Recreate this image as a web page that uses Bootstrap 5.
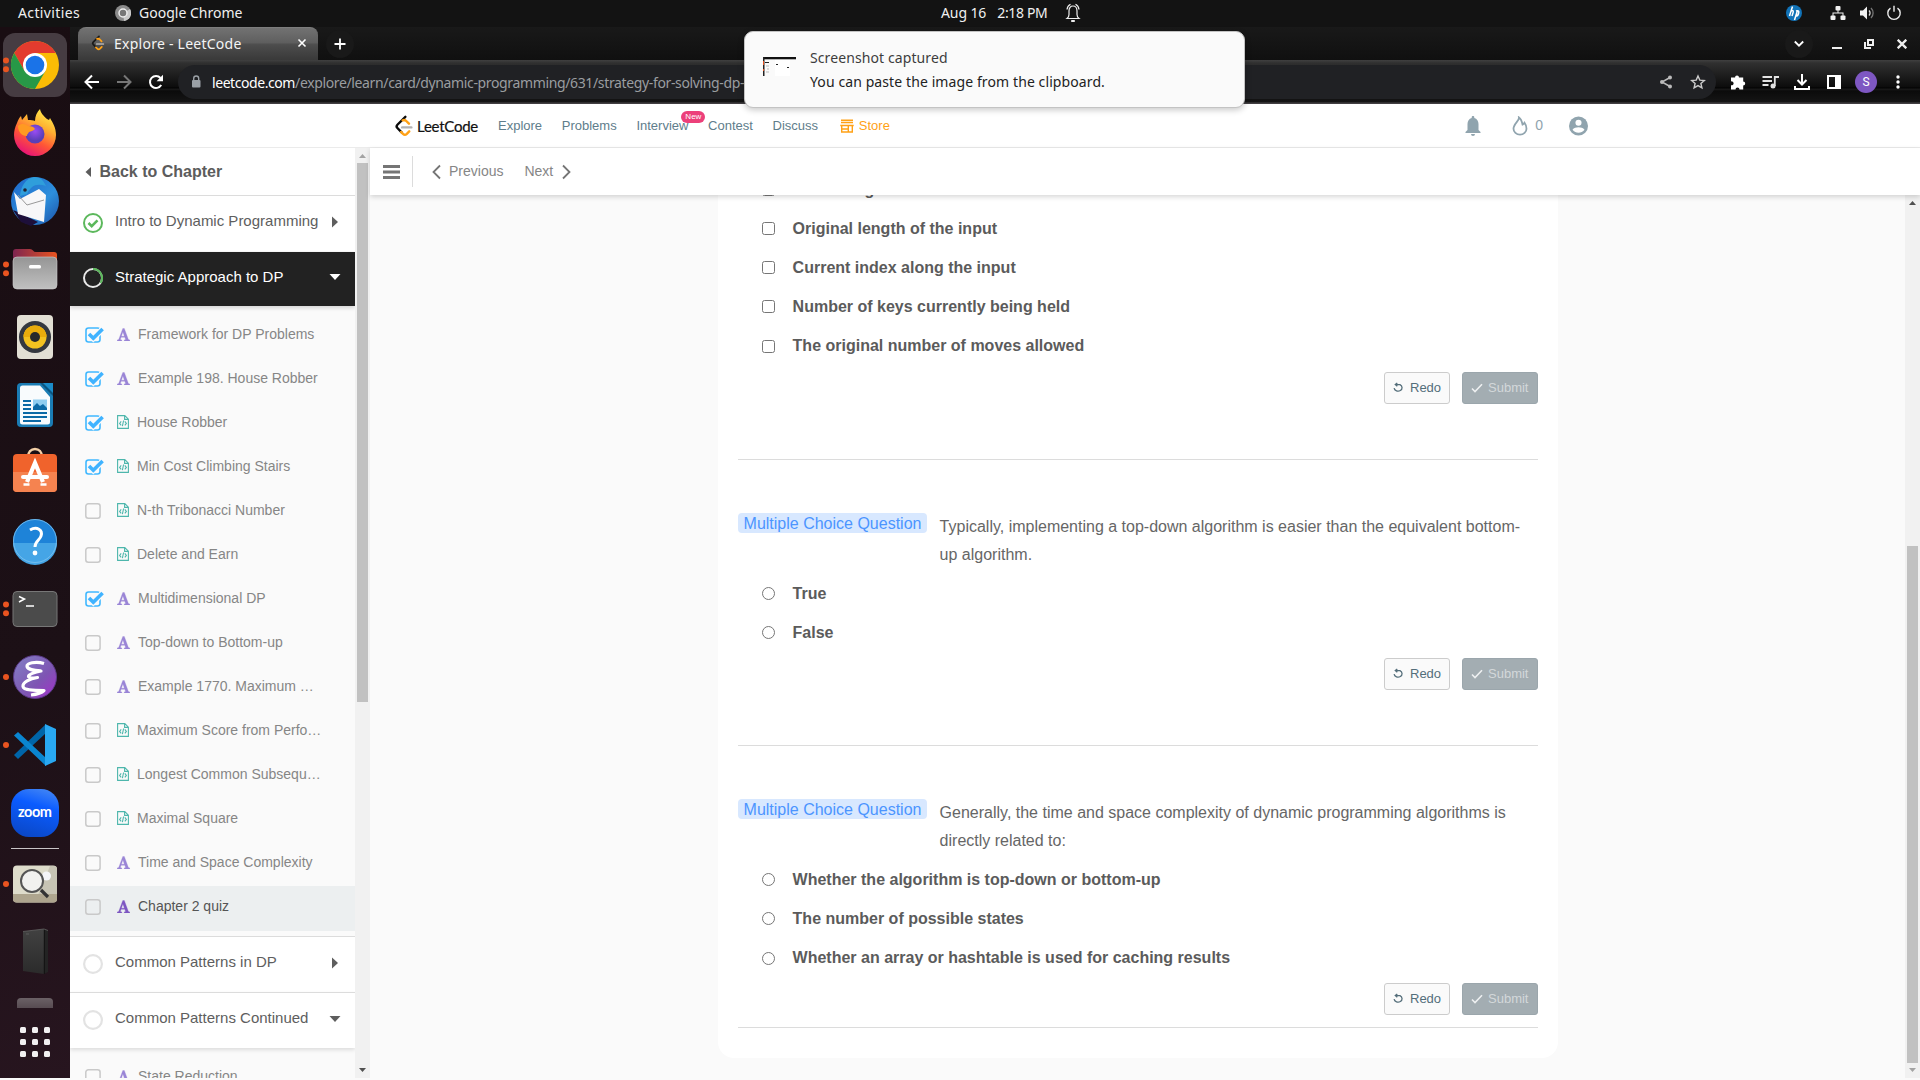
<!DOCTYPE html>
<html lang="en">
<head>
<meta charset="utf-8">
<title>Explore - LeetCode</title>
<meta name="viewport" content="width=device-width, initial-scale=1">
<link href="https://cdn.jsdelivr.net/npm/bootstrap@5.3.0/dist/css/bootstrap.min.css" rel="stylesheet">
<style>
  html, body { height: 100%; overflow: hidden; }
  body { font-family: "Liberation Sans", Arial, sans-serif; color: #5a5a5a; background: #fafafa; font-size: 14px; line-height: 1.5; }
  svg { display: block; flex: none; }
  .desk { width: 1920px; height: 1080px; }
  .sysfont { font-family: "Noto Sans", "Open Sans", sans-serif; white-space: pre; }

  /* GNOME top bar */
  .topbar { height: 27px; background: #131313; color: #f0f0f0; font-size: 14px; line-height: 22px; padding-bottom: 1px; }
  .tb-side { width: 941px; }
  .tb-act { margin-left: 18px; letter-spacing: .37px; }
  .tb-app { margin-left: 35px; }
  .tb-date { letter-spacing: -.1px; }
  .tb-time { margin-left: 11px; letter-spacing: -.35px; }
  .tb-bell { margin-left: 18px; }

  /* dock */
  .dock { width: 70px; background: linear-gradient(160deg, #190d12 0%, #1c1016 60%, #27151f 100%); padding-top: 4px; }
  .dock-rule { width: 48px; height: 1px; margin: 1px 0; background: #c9c5c7; }
  .dock-part { height: 22px; overflow: hidden; }

  /* browser chrome */
  .browser { width: 1850px; }
  .tabstrip { height: 33px; background: linear-gradient(#191919, #101010); }
  .tab { width: 240px; height: 33px; margin-left: 8px; border-radius: 8px 8px 0 0; background: linear-gradient(#727272 0, #5f5f5f 45%, #4d4d4d 52%, #393939 100%); border-top: 1px solid #7d7d7d; color: #f4f4f4; font-size: 14px; padding: 0 8px 2px 12px; }
  .tab-title { margin-left: 8px; letter-spacing: .25px; }
  .round-btn { width: 28px; height: 28px; border-radius: 50%; background: #191919; }
  .w32 { width: 32px; }
  .toolbar-row { height: 44px; background: linear-gradient(#404040 0, #303030 3px, #0c0c0c 27px, #000 28px, #1b1b1b 29px, #0b0b0b 31px, #151515 42px, #4a474a 43px, #3a373a 44px); padding-left: 6px; }
  .urlbox { width: 1538px; height: 34px; border-radius: 17px; background: #202124; color: #9a9da0; font-size: 14px; padding: 0 2px 0 8px; margin-left: 6px; letter-spacing: -.36px; }
  .urlbox b { font-weight: 400; color: #fff; letter-spacing: -.43px; }
  .avatar { width: 22px; height: 22px; border-radius: 50%; background: #7e57c2; color: #fff; font-size: 12px; font-family: Roboto, sans-serif; }

  /* site header */
  .site-head { height: 44px; background: #fff; border-bottom: 1px solid #ebebeb; font-size: 13px; color: #607d8b; padding-left: 323px; }
  .site-head .nl { line-height: 18px; }
  .site-nav { gap: 19.700px; }
  .brandname { width: 61px; margin-left: 2px; font-family: Lato, sans-serif; font-size: 15px; color: #111; -webkit-text-stroke: .2px #111; letter-spacing: -.25px; line-height: 20px; white-space: nowrap; }
  .new-tag { position: absolute; left: 45px; top: -6px; width: 24px; height: 12px; border-radius: 7px; background: #ec407a; color: #fff; font-size: 8px; line-height: 12px; text-align: center; }

  /* chapter sidebar */
  .side { width: 285px; height: 930px; overflow: hidden; background: #fafafa; }
  .back-row { height: 48px; background: #fff; border-bottom: 1px solid #dcdcdc; font-size: 16px; font-weight: 700; padding-left: 15px; padding-top: 1px; color: #5c5c5c; gap: 8.500px; }
  .chap { height: 55px; background: #fff; font-size: 15px; color: #5e5e5e; padding-left: 13px; padding-right: 12px; }
  .chap > svg { margin-bottom: 2px; }
  .chap .cname { margin-left: 12px; padding-bottom: 4px; }
  .chap .caret { padding-bottom: 4px; width: 16px; }
  .chap.active-chap { height: 54px; background: #222; color: #fff; box-shadow: 0 2px 4px rgba(0,0,0,.15); position: relative; margin-top: 1px; }
  .chap.open-chap { box-shadow: 0 2px 4px rgba(0,0,0,.12); position: relative; }
  .chap.ruled { border-top: 1px solid #dcdcdc; height: 56px; }
  .lessons { padding: 8px 0 6px; }
  .lesson { height: 44px; padding-left: 15px; padding-bottom: 4px; color: #868686; font-size: 14px; }
  .lesson.current { background: #eceff0; color: #555; height: 45px; padding-bottom: 5px; margin-bottom: -1px; }
  .lesson .lname { line-height: 20px; }
  .tick { margin-top: 1px; width: 20px; }
  .kind { width: 13px; margin: 0 8px 0 12px; }
  .kind.code { width: 12px; }

  /* scrollbars drawn as part of the page */
  .sbar { width: 15px; background: #f1f1f1; }
  .sbar .thumb { width: 11px; background: #c1c1c1; }

  /* lesson area */
  .mainbar { height: 47px; background: #fff; color: #868686; font-size: 14px; box-shadow: 0 2px 5px rgba(0,0,0,.16); position: relative; padding-left: 13px; }
  .vrule { width: 1px; height: 31px; background: #dcdcdc; }
  .main { width: 1550px; height: 930px; background: #fafafa; }
  .scroller { height: 883px; overflow: hidden; }
  .quiz { width: 840px; flex: none; background: #fff; border-radius: 0 0 16px 16px; padding: 0 20px 30px; margin: 0 auto 20px 348px; font-size: 16px; }
  .opt { height: 39.2px; padding-left: 24px; font-weight: 700; color: #5b5b5b; line-height: 20px; }
  .opt .form-check-input { width: 13px; height: 13px; margin: 0 17.600px .6px 0; border: 1px solid #767676; flex: none; }
  .opt .form-check-input[type=checkbox] { border-radius: 2.5px; }
  .acts { margin-top: 6px; gap: 12px; }
  .acts-last { margin-top: 5px; }
  .acts .btn { height: 32px; font-size: 13px; padding: 0 8px; border-radius: 3px; line-height: 30px; gap: 5px; }
  .btn-redo { width: 66px; background: #fafafa; border: 1px solid #ccc; color: #546e7a; }
  .btn-send { width: 76px; background: #a3adb2; border: 1px solid #9ba6ac; color: #d3d8da; }
  .qline { height: 1px; background: #dcdcdc; }
  .qline-mid { margin: 55px 0 53px; }
  .qtag { height: 20px; width: 189px; border-radius: 4px; background: #d8e8ff; color: #4c95ff; line-height: 21px; text-align: center; flex: none; }
  .qtext { margin-left: 12.600px; padding-right: 6px; line-height: 27.5px; color: #666; }
  .qhead { height: 55px; margin-bottom: 6px; }

  /* desktop notification */
  .note { position: absolute; left: 744px; top: 31px; width: 501px; height: 77px; border-radius: 9px; background: #fafafa; border: 1px solid #c3c3c3; box-shadow: 0 2px 6px rgba(0,0,0,.22); z-index: 20; padding-left: 18px; font-size: 14px; color: #3d3d3d; letter-spacing: .1px; }
  .note .shot { margin-bottom: 6px; }
  .note .lines { line-height: 24px; margin-left: 14px; }
  .note .second { color: #222; }
</style>
<script src="https://cdn.jsdelivr.net/npm/bootstrap@5.3.0/dist/js/bootstrap.bundle.min.js"></script>
</head>
<body>
<svg width="0" height="0" class="position-absolute">
  <defs>
    <symbol id="i-checked" viewBox="0 0 20 17"><rect x="1" y="2" width="14" height="14" rx="2.500" fill="none" stroke="#40b8ff" stroke-width="1.600"/><path d="M4.300 8.300l4 4 9.500-9.500" fill="none" stroke="#fafafa" stroke-width="6"/><path d="M4 8l4.300 4.300L17.600 3" fill="none" stroke="#40b3ff" stroke-width="3.600"/></symbol>
    <symbol id="i-box" viewBox="0 0 20 17"><rect x=".8" y="1.800" width="14.300" height="14.400" rx="2.500" fill="none" stroke="#c9c9c9" stroke-width="1.500"/></symbol>
    <symbol id="i-art" viewBox="0 0 13 13"><path fill-rule="evenodd" d="M5.800.400h1.500l4.100 11.200 1.400.4v.9H7.200V12l1.400-.4-.8-2.300H4.100l-.8 2.300 1.500.4v.9H.2V12l1.500-.4zM5.900 3.900L4.400 8.200h3z" fill="currentColor" stroke="currentColor" stroke-width=".3"/></symbol>
    <symbol id="i-code" viewBox="0 0 12 14"><path d="M.6.600h7.200l3.600 3.600v9.200H.600zM7.600.600v3.800h3.800M4.200 6.300L2.600 8.400l1.600 2M7.800 6.300l1.600 2.100-1.600 2M6.600 5.500L5.400 11.200" fill="none" stroke="#4db6ac" stroke-width="1.100"/></symbol>
    <symbol id="i-ring" viewBox="0 0 20 20"><circle cx="10" cy="10" r="8.900" fill="none" stroke="#e3e3e3" stroke-width="2.200"/></symbol>
    <symbol id="i-right" viewBox="0 0 16 16"><path d="M5 2.500l6 5.500-6 5.500z" fill="currentColor"/></symbol>
    <symbol id="i-down" viewBox="0 0 16 16"><path d="M2.500 5h11L8 11z" fill="currentColor"/></symbol>
    <symbol id="i-redo" viewBox="0 0 12 12"><path d="M2.300 2.600H7a4 3.500 0 1 1-5.900 3.600M4.300.900L2.300 2.600l2 1.600" fill="none" stroke="#546e7a" stroke-width="1.300"/></symbol>
    <symbol id="i-ok" viewBox="0 0 12 12"><path d="M1 6.500l3 3L11 2.300" fill="none" stroke="#eef0f1" stroke-width="1.600"/></symbol>
    <symbol id="i-leet" viewBox="0 0 24 24"><path d="M13.500 2L4.800 10.600a2.600 2.600 0 0 0 0 3.600l4.600 4.700" fill="none" stroke="var(--lc, #0a0a0a)" stroke-width="2.600" stroke-linecap="round"/><path d="M10.500 5.800l1.500-.3a3 3 0 0 1 2.200.8l3.200 3.200M8.900 18.500l2 2a3 3 0 0 0 4.200 0l2.600-2.700" fill="none" stroke="#ffa116" stroke-width="2.600" stroke-linecap="round"/><path d="M10 13.500h10" stroke="#b3b3b3" stroke-width="2.600" stroke-linecap="round"/></symbol>
    <linearGradient id="g-folder" x1="0" y1="0" x2="0" y2="1"><stop offset="0" stop-color="#959595"/><stop offset="1" stop-color="#c0c0c0"/></linearGradient>
    <linearGradient id="g-folderback"><stop offset="0" stop-color="#7d2550"/><stop offset="1" stop-color="#e95420"/></linearGradient>
    <linearGradient id="g-fox" x1=".8" y1="0" x2=".3" y2="1"><stop offset="0" stop-color="#fff44f"/><stop offset=".35" stop-color="#ffb031"/><stop offset=".65" stop-color="#ff5636"/><stop offset="1" stop-color="#e6107a"/></linearGradient>
    <radialGradient id="g-globe" cx=".5" cy=".35"><stop offset="0" stop-color="#9a4cf4"/><stop offset="1" stop-color="#5a3fb8"/></radialGradient>
    <linearGradient id="g-emacs" x1="0" y1="0" x2="1" y2="1"><stop offset="0" stop-color="#8381c5"/><stop offset=".6" stop-color="#7e55b3"/><stop offset="1" stop-color="#a52ecb"/></linearGradient>
    <linearGradient id="g-zoom" x1=".7" y1="0" x2=".4" y2="1"><stop offset="0" stop-color="#3f83f5"/><stop offset=".35" stop-color="#0b5cff"/><stop offset="1" stop-color="#0a48c8"/></linearGradient>
    <linearGradient id="g-bird" x1="0" y1="0" x2="1" y2="1"><stop offset="0" stop-color="#1d66c8"/><stop offset=".6" stop-color="#2d8fdc"/><stop offset="1" stop-color="#1b4fa6"/></linearGradient>
    <linearGradient id="g-drive" x1="0" y1="0" x2="0" y2="1"><stop offset="0" stop-color="#414141"/><stop offset="1" stop-color="#2b2b2b"/></linearGradient>
    <linearGradient id="g-part" x1="0" y1="0" x2="0" y2="1"><stop offset="0" stop-color="#6b6166"/><stop offset=".5" stop-color="#43363d"/></linearGradient>
  </defs>
</svg>

<div class="desk d-flex flex-column position-relative">
  <header class="topbar sysfont d-flex align-items-center">
    <div class="tb-side d-flex align-items-center">
      <span class="tb-act">Activities</span>
      <svg class="tb-app" width="16" height="20" viewBox="0 0 16 20"><circle cx="8" cy="10" r="8" fill="#8b8b8b"/><path d="M8 10l7-4a8 8 0 0 1-6 12z" fill="#c9c9c9"/><circle cx="8" cy="10" r="4" fill="#777" stroke="#eee" stroke-width="1.500"/></svg>
      <span class="ms-2">Google Chrome</span>
    </div>
    <span class="tb-date">Aug 16</span><span class="tb-time">2:18 PM</span>
    <svg class="tb-bell" width="16" height="20" viewBox="0 0 16 20" fill="none" stroke="#eee" stroke-width="1.200"><path d="M2 15.500h12c-1.500-1.200-2-2.300-2-4V8c0-3-1.500-5-4-5S4 5 4 8v3.500c0 1.700-.5 2.800-2 4z"/><path d="M2 6.500C2.200 4 3.500 2.200 5.500 1.200M14 6.500c-.2-2.500-1.500-4.300-3.500-5.300"/><path d="M6.200 18h3.600" stroke-width="2"/></svg>
    <div class="d-flex align-items-center ms-auto" style="padding-right:18px">
      <svg width="16" height="16" viewBox="0 0 16 16"><circle cx="8" cy="8" r="8" fill="#1173b8"/><path d="M6.500 1.500L3.500 11M4.600 6.500c2-1.500 3-.9 2.600.6L6 11M11.500 5.500L8.500 15M10 6c2.500-1 3.300.2 2.600 2.400-.6 2-1.600 3-3.400 2.600" fill="none" stroke="#fff" stroke-width="1.500"/></svg>
      <svg width="16" height="16" viewBox="0 0 16 16" style="margin-left:28px" fill="#f2f2f2"><rect x="5.500" y="1" width="5" height="4.500" rx="1"/><rect x=".5" y="10.500" width="5" height="4.500" rx="1"/><rect x="10.500" y="10.500" width="5" height="4.500" rx="1"/><path d="M7.500 5h1v2.500H13.500V11h-1V8.500h-9V11h-1V7.500h5z"/></svg>
      <svg width="16" height="16" viewBox="0 0 16 16" style="margin-left:13px"><path d="M1 5.500h3L8 1.500v13L4 10.500H1z" fill="#f2f2f2"/><path d="M10 5.500a3.500 3.500 0 0 1 0 5" fill="none" stroke="#ddd" stroke-width="1.300"/><path d="M12 3a7 7 0 0 1 0 10" fill="none" stroke="#777" stroke-width="1.300"/></svg>
      <svg width="16" height="16" viewBox="0 0 16 16" style="margin-left:11px" fill="none" stroke="#eee" stroke-width="1.400"><path d="M4.500 3.100a6.200 6.200 0 1 0 7 0M8 .8v6"/></svg>
    </div>
  </header>

  <div class="d-flex">
    <nav class="dock d-flex flex-column align-items-center">
      <svg width="70" height="68" viewBox="0 0 70 68"><rect x="3" y="2" width="64" height="64" rx="12" fill="#463c42"/><circle cx="6" cy="29.500" r="3" fill="#e95420"/><circle cx="6" cy="38.300" r="3" fill="#e95420"/><g transform="translate(35 34)"><circle r="24" fill="#fbbc05"/><path d="M0-12H20.800A24 24 0 0 0-20.800-12L-10.400 6z" fill="#e33b2e"/><path d="M-20.800-12A24 24 0 0 0 0 24L10.400 6-10.400 6z" fill="#279847"/><circle r="12" fill="#fff"/><circle r="9.300" fill="#1a73e8"/></g></svg>
      <svg width="70" height="68" viewBox="0 0 70 68"><path d="M17 24c1-3 2-5 4-7l1 4 5-6 1 6c3 0 5 0 7 1 0-5 2-9 5-12 1 5 4 7 7 10l2 1 1-2c3 5 6 10 6 17a21 21 0 0 1-42 0c0-4 1-8 3-12z" fill="url(#g-fox)"/><circle cx="35" cy="35" r="9.500" fill="url(#g-globe)"/><path d="M18 27c4-4 9-1 10 0 4 0 6 1 7 3-2 2-4 2-6 3-1 2-2 2-2 4-6 0-9-5-9-10z" fill="#ff9a22"/></svg>
      <svg width="70" height="68" viewBox="0 0 70 68"><circle cx="35" cy="34" r="24" fill="url(#g-bird)"/><path d="M13 43l8 12 10 4 7-4-20-10z" fill="#1d0f3a"/><path d="M14 25l6 7 19-10 7 6-2 27-26-8z" fill="#f7f7f8"/><path d="M18 28l9 10 17-5" fill="none" stroke="#999" stroke-width="1"/><path d="M20 29c1-10 6-18 14-19 8 0 10 5 12 9-10-3-15 0-19 8z" fill="#2f9edb"/><circle cx="25" cy="23" r="1.800" fill="#223"/></svg>
      <svg width="70" height="68" viewBox="0 0 70 68"><circle cx="6" cy="29.500" r="3" fill="#e95420"/><circle cx="6" cy="38.300" r="3" fill="#e95420"/><path d="M13 30V17q0-3 3-3h14q2 0 3 1.500T36 17h18q3 0 3 3v15z" fill="url(#g-folderback)"/><rect x="13" y="22" width="44" height="32" rx="4" fill="url(#g-folder)" stroke="#ccc" stroke-width=".6"/><rect x="29" y="30" width="12" height="3.400" rx="1.500" fill="#fff"/></svg>
      <svg width="70" height="68" viewBox="0 0 70 68"><rect x="17" y="12" width="36" height="44" rx="4" fill="#e2dfd4"/><circle cx="35" cy="34" r="16" fill="#34383f"/><circle cx="35" cy="34" r="11.500" fill="#f3c220"/><path d="M23.500 34a11.500 11.500 0 0 1 23 0z" fill="#e9ac0c"/><circle cx="35" cy="34" r="5" fill="#26282b"/></svg>
      <svg width="70" height="68" viewBox="0 0 70 68"><path d="M17 16q0-4 4-4h21l11 12v28q0 4-4 4H21q-4 0-4-4z" fill="#1a7cb4"/><path d="M20 17q0-2.500 2.500-2.500H40L50 26v25q0 2.500-2.500 2.500h-25Q20 53.500 20 51z" fill="#f8fbfd"/><path d="M40 12h13v13z" fill="#0b5580"/><path d="M43 12h10v10z" fill="#1b8cc9"/><path d="M23 30h8M23 34h8M23 38h8M23 42h24M23 46h24M23 50h18" stroke="#0c6aa6" stroke-width="2"/><rect x="33" y="28.500" width="14" height="10.500" fill="#8fcdf0"/><path d="M33 39v-3l4-4 3 3 3-2 4 4v2z" fill="#0c6aa6"/></svg>
      <svg width="70" height="68" viewBox="0 0 70 68"><path d="M28 18c0-5 3-8 7-8s7 3 7 8" fill="none" stroke="#f3cfa6" stroke-width="2.400"/><rect x="13" y="15" width="44" height="38" rx="4" fill="#f0632c"/><path d="M13 33h44v16q0 4-4 4H17q-4 0-4-4z" fill="#f58350"/><path d="M27 43l8-19 8 19" fill="none" stroke="#fff" stroke-width="4.200"/><path d="M23.500 45.500h6M40.500 45.500h6" stroke="#fff" stroke-width="2.400"/><path d="M23 38h24" stroke="#fff" stroke-width="4" stroke-linecap="round"/></svg>
      <svg width="70" height="68" viewBox="0 0 70 68"><circle cx="35" cy="34" r="22" fill="#1e83d8"/><path d="M13 36a22 22 0 0 0 44 0z" fill="#45a5e6"/><circle cx="35" cy="34" r="21.500" fill="none" stroke="#7fc3ef" stroke-width=".8"/><path d="M30 23c7-4 13 0 11 6-1 4-6 5-6 11" fill="none" stroke="#fff" stroke-width="3"/><circle cx="35" cy="46" r="2.400" fill="#fff"/></svg>
      <svg width="70" height="68" viewBox="0 0 70 68"><circle cx="6" cy="29.500" r="3" fill="#e95420"/><circle cx="6" cy="38.300" r="3" fill="#e95420"/><rect x="13" y="16.500" width="44" height="35" rx="4" fill="#4b4b4b" stroke="#777" stroke-width="1"/><path d="M19 21.500l5.500 2.500-5.500 3M26 31h8" fill="none" stroke="#fff" stroke-width="1.500"/></svg>
      <svg width="70" height="68" viewBox="0 0 70 68"><circle cx="6" cy="34" r="3" fill="#e95420"/><circle cx="35" cy="34" r="21.500" fill="url(#g-emacs)" stroke="#5a3a86" stroke-width="1"/><path d="M44 20.500c-8-2.500-18-.5-17 3s8 4 14 4.500c-6 1-13 3.500-12.500 5.500s5 1.500 9 1c-8 1-15 5-14.500 9s13 4 21 4c-3 3-9 4-13 4.500" fill="none" stroke="#fff" stroke-width="3.200" stroke-linejoin="round"/></svg>
      <svg width="70" height="68" viewBox="0 0 70 68"><circle cx="6" cy="34" r="3" fill="#e95420"/><path d="M14 44l4 4 28-26v-9z" fill="#0065a9"/><path d="M14 24.500l4-3.500 28 26v8z" fill="#0a86d1"/><path d="M45 13l11 5v32l-11 5z" fill="#29a8f2"/></svg>
      <svg width="70" height="68" viewBox="0 0 70 68"><rect x="11" y="10" width="48" height="48" rx="18" fill="url(#g-zoom)"/><text x="35" y="38" text-anchor="middle" font-family="Lato, sans-serif" font-weight="700" font-size="14.500" fill="#fff" textLength="34">zoom</text></svg>
      <div class="dock-rule"></div>
      <svg width="70" height="68" viewBox="0 0 70 68"><circle cx="6" cy="34" r="3" fill="#e95420"/><rect x="13" y="15.500" width="44" height="37" rx="4" fill="#dedccb"/><path d="M38 45l12-29h4q3 0 3 3v26z" fill="#c7c4b4"/><path d="M13 44h44v5q0 3.500-3.500 3.500h-37Q13 52.500 13 49z" fill="#aea58e"/><circle cx="46.500" cy="26" r="4.500" fill="#f4f5f8"/><circle cx="32" cy="31" r="11" fill="#f1f1ef" stroke="#555" stroke-width="2"/><path d="M41 40l7 7" stroke="#333" stroke-width="3.200"/></svg>
      <svg width="70" height="68" viewBox="0 0 70 68"><path d="M23 13.500l21-2.500V56L23 53z" fill="url(#g-drive)"/><path d="M44 11l4 1.500V54l-4 2z" fill="#232323"/><path d="M44.300 11v45" stroke="#111" stroke-width="1"/><path d="M23 13.500l21-2.500 4 1.500M26 16h3" fill="none" stroke="#626262" stroke-width=".8"/></svg>
      <div class="dock-part"><svg width="70" height="68" viewBox="0 0 70 68"><rect x="17" y="12" width="36" height="40" rx="4" fill="url(#g-part)"/></svg></div>
      <svg width="70" height="68" viewBox="0 0 70 68" fill="#f2f0f1"><g id="d3"><rect x="20" y="19" width="6" height="6" rx="1.500"/><rect x="32" y="19" width="6" height="6" rx="1.500"/><rect x="44" y="19" width="6" height="6" rx="1.500"/></g><use href="#d3" y="12"/><use href="#d3" y="24"/></svg>
    </nav>

    <div class="browser">
      <div class="tabstrip d-flex align-items-center">
        <div class="tab sysfont d-flex align-items-center">
          <svg width="16" height="16" style="--lc:#1a1a1a"><use href="#i-leet"/></svg>
          <span class="tab-title">Explore - LeetCode</span>
          <svg class="ms-auto" width="16" height="16" viewBox="0 0 16 16"><path d="M4.500 4.500l7 7M11.500 4.500l-7 7" stroke="#fff" stroke-width="1.600"/></svg>
        </div>
        <div class="round-btn d-flex align-items-center justify-content-center ms-2"><svg width="12" height="12" viewBox="0 0 12 12"><path d="M6 .5v11M.5 6h11" stroke="#fff" stroke-width="1.800"/></svg></div>
        <div class="round-btn d-flex align-items-center justify-content-center ms-auto"><svg width="10" height="10" viewBox="0 0 10 10"><path d="M.8 2.500L5 6.700l4.200-4.200" fill="none" stroke="#fff" stroke-width="1.800"/></svg></div>
        <svg width="10" height="14" viewBox="0 0 10 14" style="margin-left:19px"><rect y="10" width="10" height="2" fill="#eee"/></svg>
        <svg width="10" height="10" viewBox="0 0 10 10" style="margin-left:22px" fill="none" stroke="#eee" stroke-width="2"><rect x="4" y="1" width="5" height="5"/><path d="M1 3v6h6"/></svg>
        <svg width="10" height="10" viewBox="0 0 10 10" style="margin:0 13px 0 23px"><path d="M.7.700l8.600 8.600M9.300.700L.7 9.300" stroke="#eee" stroke-width="2.300"/></svg>
      </div>
      <div class="toolbar-row d-flex align-items-center">
        <div class="w32 d-flex justify-content-center"><svg width="16" height="16" viewBox="0 0 16 16"><path d="M15 8H2M8 1.500L1.500 8 8 14.500" fill="none" stroke="#fff" stroke-width="2"/></svg></div>
        <div class="w32 d-flex justify-content-center"><svg width="16" height="16" viewBox="0 0 16 16"><path d="M1 8h13M8 1.500L14.500 8 8 14.500" fill="none" stroke="#777" stroke-width="2"/></svg></div>
        <div class="w32 d-flex justify-content-center"><svg width="16" height="16" viewBox="0 0 16 16"><path d="M13.200 11A6 6 0 1 1 12.500 4" fill="none" stroke="#fff" stroke-width="2"/><path d="M15 .8v6.400H8.600z" fill="#fff"/></svg></div>
        <div class="urlbox sysfont d-flex align-items-center">
          <svg width="20" height="16" viewBox="0 0 20 16"><rect x="6" y="6" width="8.500" height="7.500" rx="1" fill="#9aa0a6"/><path d="M7.700 6V4.500a2.500 2.500 0 0 1 5 0V6" fill="none" stroke="#9aa0a6" stroke-width="1.400"/></svg>
          <span style="margin-left:6px"><b>leetcode.com</b><span>/explore/learn/card/dynamic-programming/631/strategy-for-solving-dp-</span></span>
          <div class="w32 d-flex justify-content-center ms-auto"><svg width="14" height="14" viewBox="0 0 14 14"><path d="M11 2.500L3 7l8 4.500" fill="none" stroke="#bbb" stroke-width="1.500"/><g fill="#bbb"><circle cx="11" cy="2.500" r="2"/><circle cx="3" cy="7" r="2"/><circle cx="11" cy="11.500" r="2"/></g></svg></div>
          <div class="w32 d-flex justify-content-center"><svg width="16" height="16" viewBox="0 0 16 16"><path d="M8 2l1.800 4.100 4.500.4-3.400 3 1 4.400L8 11.600l-3.900 2.300 1-4.400-3.400-3 4.500-.4z" fill="none" stroke="#ccc" stroke-width="1.400"/></svg></div>
        </div>
        <div class="d-flex align-items-center" style="margin-left:6px">
          <div class="w32 d-flex justify-content-center"><svg width="16" height="16" viewBox="0 0 16 16"><path d="M1 3.500h4a2 2 0 1 1 4 0h4.200v4a2 2 0 1 1 0 4v4H9.500a2 2 0 1 0-4 0H1v-4.300a2 2 0 1 0 0-3.800z" fill="#fff"/></svg></div>
          <div class="w32 d-flex justify-content-center"><svg width="17" height="16" viewBox="0 0 17 16"><path d="M.5 3h9.500M.5 7h9.500M.5 11h6" stroke="#e3e3e3" stroke-width="1.800"/><circle cx="11" cy="12" r="2.500" fill="#e3e3e3"/><path d="M12.800 12V3H17" fill="none" stroke="#e3e3e3" stroke-width="1.800"/></svg></div>
          <div class="w32 d-flex justify-content-center"><svg width="16" height="16" viewBox="0 0 16 16"><path d="M8 0v10M3.500 6L8 10.500 12.500 6M1 12v3h14v-3" fill="none" stroke="#fff" stroke-width="2"/></svg></div>
          <div class="w32 d-flex justify-content-center"><svg width="14" height="14" viewBox="0 0 14 14"><rect x="1" y="1" width="12" height="12" fill="none" stroke="#fff" stroke-width="2"/><rect x="8" y="1" width="5" height="12" fill="#fff"/></svg></div>
          <div class="w32 d-flex justify-content-center"><span class="avatar d-flex align-items-center justify-content-center">S</span></div>
          <div class="w32 d-flex justify-content-center"><svg width="4" height="14" viewBox="0 0 4 14" fill="#fff"><circle cx="2" cy="2" r="1.700"/><circle cx="2" cy="7" r="1.700"/><circle cx="2" cy="12" r="1.700"/></svg></div>
        </div>
      </div>

      <div class="site-head d-flex align-items-center">
        <svg width="22" height="22" viewBox="1 0 22 24"><use href="#i-leet" width="24" height="24"/></svg>
        <span class="brandname">LeetCode</span>
        <div class="site-nav d-flex align-items-center ms-3 ps-1">
          <span class="nl">Explore</span><span class="nl">Problems</span>
          <span class="nl position-relative">Interview<span class="new-tag">New</span></span>
          <span class="nl">Contest</span><span class="nl">Discuss</span>
          <span class="nl d-flex align-items-center" style="color:#ffa116;gap:5px;margin-left:2px"><svg width="14" height="14" viewBox="0 0 14 14"><path d="M1 1.200h12M1 3.600h12M.3 6.600h13.400" stroke="#ffa116" stroke-width="1.500"/><path d="M1.700 6v7h10.600V6M1.700 10h6.600M8.300 7v6" fill="none" stroke="#ffa116" stroke-width="1.400"/></svg>Store</span>
        </div>
        <div class="d-flex align-items-center ms-auto" style="margin-right:332px;color:#90a4ae">
          <svg width="16" height="20" viewBox="0 0 16 20"><path d="M8 0c.8 0 1.300.5 1.300 1.300v.6C12 2.500 13.500 5 13.500 8v6l2 2v1H.5v-1l2-2V8c0-3 1.500-5.500 4.200-6.100v-.6C6.700.500 7.200 0 8 0zM6 18h4a2 2 0 0 1-4 0z" fill="currentColor"/></svg>
          <svg width="16" height="20" viewBox="0 0 16 20" style="margin-left:31px"><path d="M7 1.500c.5 3-5.500 6.500-5.500 11.200a6.500 6 0 0 0 13 0c0-2.800-1-4.700-2-6-.6 1.200-1 1.700-1.900 2C10 6 9.200 3 7 1.500z" fill="none" stroke="currentColor" stroke-width="1.800"/></svg>
          <span style="font-size:14px;margin-left:7px">0</span>
          <svg width="19" height="20" viewBox="0 0 20 20" style="margin-left:26px"><circle cx="10" cy="10" r="10" fill="currentColor"/><circle cx="10" cy="6.500" r="3.200" fill="#fff"/><path d="M3.700 14c1.300-2 4-2.700 6.300-2.700s5 .7 6.300 2.700c-1.500 2-4 3-6.300 3s-4.800-1-6.300-3z" fill="#fff"/></svg>
        </div>
      </div>

      <div class="d-flex">
        <aside class="side">
          <div class="back-row d-flex align-items-center"><svg width="6" height="10" viewBox="0 0 6 10"><path d="M6 0v10L.5 5z" fill="#5c5c5c"/></svg><span>Back to Chapter</span></div>
          <div class="chap d-flex align-items-center"><svg width="20" height="20" viewBox="0 0 20 20"><circle cx="10" cy="10" r="9" fill="none" stroke="#5cb85c" stroke-width="2"/><path d="M5.500 10l3.200 3.200 5.800-5.800" fill="none" stroke="#5cb85c" stroke-width="2.600"/></svg><span class="cname">Intro to Dynamic Programming</span><span class="caret ms-auto"><svg width="16" height="16"><use href="#i-right"/></svg></span></div>
          <div class="chap active-chap d-flex align-items-center"><svg width="20" height="20" viewBox="0 0 20 20"><circle cx="10" cy="10" r="9" fill="none" stroke="#e8e8e8" stroke-width="2"/><path d="M10 1a9 9 0 0 1 7.500 14" fill="none" stroke="#5cb85c" stroke-width="2"/></svg><span class="cname">Strategic Approach to DP</span><span class="caret ms-auto"><svg width="16" height="16"><use href="#i-down"/></svg></span></div>
          <div class="lessons" id="lessons"></div>
          <div class="chap ruled d-flex align-items-center"><svg width="20" height="20"><use href="#i-ring"/></svg><span class="cname">Common Patterns in DP</span><span class="caret ms-auto"><svg width="16" height="16"><use href="#i-right"/></svg></span></div>
          <div class="chap ruled open-chap d-flex align-items-center"><svg width="20" height="20"><use href="#i-ring"/></svg><span class="cname">Common Patterns Continued</span><span class="caret ms-auto"><svg width="16" height="16"><use href="#i-down"/></svg></span></div>
          <div class="lessons" id="more"></div>
        </aside>
        <div class="sbar d-flex flex-column align-items-center" style="height:930px">
          <svg width="15" height="15" viewBox="0 0 15 15"><path d="M4 10h7L7.500 6z" fill="#a3a3a3"/></svg>
          <div class="thumb" style="height:539px"></div>
          <svg class="mt-auto" width="15" height="15" viewBox="0 0 15 15"><path d="M4 5h7L7.500 9z" fill="#505050"/></svg>
        </div>

        <main class="main">
          <div class="mainbar d-flex align-items-center">
            <svg width="17" height="14" viewBox="0 0 17 14"><path d="M0 1.500h17M0 7h17M0 12.500h17" stroke="#757575" stroke-width="2.800"/></svg>
            <div class="vrule" style="margin-left:12px"></div>
            <svg width="9" height="16" viewBox="0 0 9 16" style="margin-left:19px"><path d="M8 1.500L1.500 8 8 14.500" fill="none" stroke="#757575" stroke-width="1.800"/></svg>
            <span class="ms-2">Previous</span><span style="margin-left:21px">Next</span>
            <svg width="9" height="16" viewBox="0 0 9 16" style="margin-left:9px"><path d="M1 1.500L7.500 8 1 14.500" fill="none" stroke="#757575" stroke-width="1.800"/></svg>
          </div>
          <div class="scroller d-flex">
            <div class="d-flex flex-column justify-content-end flex-grow-1" style="height:883px">
              <section class="quiz" id="quiz"></section>
            </div>
            <div class="sbar d-flex flex-column align-items-center">
              <svg width="15" height="15" viewBox="0 0 15 15"><path d="M4 10h7L7.500 6z" fill="#505050"/></svg>
              <div class="thumb" style="height:517px;margin-top:336px"></div>
              <svg width="15" height="15" viewBox="0 0 15 15"><path d="M4 5h7L7.500 9z" fill="#a3a3a3"/></svg>
            </div>
          </div>
        </main>
      </div>
    </div>
  </div>

  <div class="note sysfont d-flex align-items-center">
    <svg class="shot" width="33" height="19" viewBox="0 0 33 19"><rect x="12" y="2" width="15" height="17" fill="#fff"/><rect width="33" height="2.300" fill="#111"/><rect width="1.500" height="19" fill="#222"/><path d="M.5 4v4M.5 12v2" stroke="#e95420"/><path d="M2 5.500h4M13 7.500h2M24 10.500h2" stroke="#222"/><path d="M3 9h3M4 12h2M3 15h3" stroke="#bbb"/></svg>
    <div class="lines"><div>Screenshot captured</div><div class="second">You can paste the image from the clipboard.</div></div>
  </div>
</div>

<script>
  const icon = (id, w, h) => `<svg width="${w}" height="${h}"><use href="#${id}"/></svg>`;
  const lesson = ([done, kind, name, cur]) => `<div class="lesson d-flex align-items-center${cur ? ' current' : ''}">
    <span class="tick">${icon(done ? 'i-checked' : 'i-box', 20, 17)}</span>
    <span class="kind ${kind === 'c' ? 'code' : ''}" style="color:${cur ? '#7e57c2' : '#9a85d6'}">${kind === 'c' ? icon('i-code', 12, 14) : icon('i-art', 13, 13)}</span>
    <span class="lname">${name}</span></div>`;
  document.getElementById('lessons').innerHTML = [
    [1, 'a', 'Framework for DP Problems'], [1, 'a', 'Example 198. House Robber'],
    [1, 'c', 'House Robber'], [1, 'c', 'Min Cost Climbing Stairs'],
    [0, 'c', 'N-th Tribonacci Number'], [0, 'c', 'Delete and Earn'],
    [1, 'a', 'Multidimensional DP'], [0, 'a', 'Top-down to Bottom-up'],
    [0, 'a', 'Example 1770. Maximum …'], [0, 'c', 'Maximum Score from Perfo…'],
    [0, 'c', 'Longest Common Subsequ…'], [0, 'c', 'Maximal Square'],
    [0, 'a', 'Time and Space Complexity'], [0, 'a', 'Chapter 2 quiz', 1]
  ].map(lesson).join('');
  document.getElementById('more').innerHTML = lesson([0, 'a', 'State Reduction']);

  const opts = (type, list) => list.map(t => `<label class="opt d-flex align-items-center"><input class="form-check-input" type="${type}"><span>${t}</span></label>`).join('');
  const acts = (extra = '') => `<div class="acts ${extra} d-flex justify-content-end">
    <button class="btn btn-redo d-flex align-items-center" type="button">${icon('i-redo', 12, 12)}<span>Redo</span></button>
    <button class="btn btn-send d-flex align-items-center" type="button">${icon('i-ok', 12, 12)}<span>Submit</span></button></div>`;
  const head = t => `<div class="qhead d-flex align-items-start"><span class="qtag">Multiple Choice Question</span><span class="qtext">${t}</span></div>`;
  document.getElementById('quiz').innerHTML =
    opts('checkbox', ['Remaining moves', 'Original length of the input', 'Current index along the input', 'Number of keys currently being held', 'The original number of moves allowed'])
    + acts() + '<div class="qline qline-mid"></div>'
    + head('Typically, implementing a top-down algorithm is easier than the equivalent bottom-up algorithm.')
    + opts('radio', ['True', 'False'])
    + acts() + '<div class="qline qline-mid"></div>'
    + head('Generally, the time and space complexity of dynamic programming algorithms is directly related to:')
    + opts('radio', ['Whether the algorithm is top-down or bottom-up', 'The number of possible states', 'Whether an array or hashtable is used for caching results'])
    + acts('acts-last') + '<div class="qline" style="margin-top:12px"></div>';
</script>
</body>
</html>
